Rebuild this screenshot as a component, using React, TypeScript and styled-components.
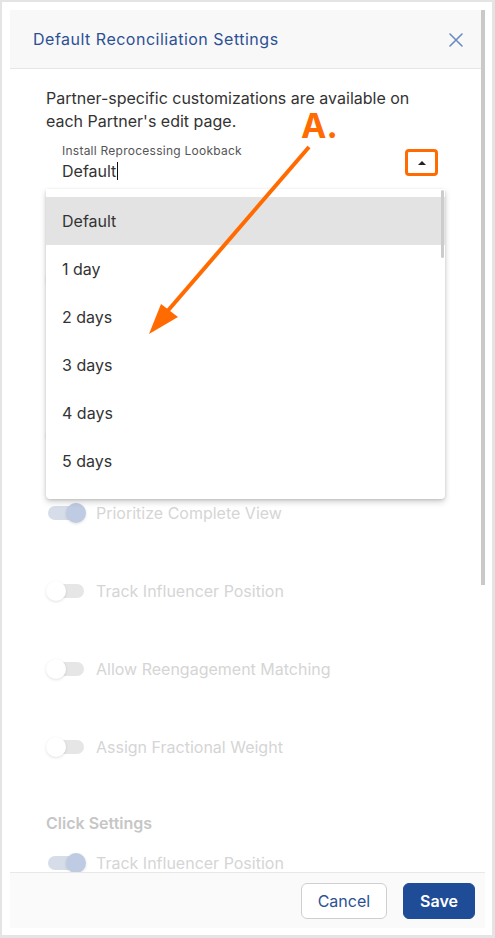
import React from 'react'
import styled, { createGlobalStyle } from 'styled-components'

const GlobalStyle = createGlobalStyle`
  html, body {
    margin: 0;
    padding: 0;
    background: #ffffff;
  }
  body {
    font-family: Inter, "Noto Sans", "Liberation Sans", sans-serif;
    color: #333333;
  }
`

const Frame = styled.div`
  position: relative;
  box-sizing: border-box;
  width: 495px;
  height: 938px;
  border: solid #e4e4e4;
  border-width: 2px 3px 3px 2px;
  padding: 8px 7px 7px 8px;
  background: #ffffff;
  overflow: hidden;
`

const Dialog = styled.div`
  position: relative;
  display: flex;
  flex-direction: column;
  height: 100%;
  background: #ffffff;
`

const Header = styled.div`
  display: flex;
  align-items: center;
  justify-content: space-between;
  height: 58px;
  padding: 0 22px 0 23px;
  background: #f8f8f9;
  border-bottom: 1px solid #e6e6e6;
  flex-shrink: 0;
`

const Title = styled.div`
  font-size: 16px;
  color: #2c5193;
  letter-spacing: 0.5px;
`

const CloseButton = styled.div`
  display: flex;
  width: 14px;
  height: 14px;
  margin-top: 2px;
`

const Body = styled.div`
  position: relative;
  flex: 1;
  overflow: hidden;
  padding: 18px 40px 0 36px;
`

const Intro = styled.p`
  margin: 0;
  font-size: 16px;
  line-height: 23px;
  color: #333333;
`

const Field = styled.div`
  position: relative;
  margin-top: 6px;
  padding: 0 8px 0 16px;
  height: 54px;
  border-bottom: 2px solid #111111;
`

const FieldLabel = styled.div`
  padding-top: 5px;
  font-size: 12px;
  line-height: 14px;
  letter-spacing: 0.25px;
  color: #555555;
`

const FieldValue = styled.div`
  display: flex;
  align-items: center;
  margin-top: 3px;
  font-size: 16px;
  line-height: 20px;
  color: #333333;
`

const Caret = styled.span`
  display: inline-block;
  width: 1px;
  height: 18px;
  margin-left: 1px;
  background: #111111;
`

const ToggleButton = styled.div`
  position: absolute;
  right: 7px;
  top: 10px;
  box-sizing: border-box;
  width: 33px;
  height: 27px;
  border: 3px solid #ff6b00;
  border-radius: 4px;
  display: flex;
  align-items: center;
  justify-content: center;
`

const UpTriangle = styled.span`
  width: 0;
  height: 0;
  border-left: 4px solid transparent;
  border-right: 4px solid transparent;
  border-bottom: 4px solid #222222;
`

const SectionTitle = styled.div<{ $gap: number }>`
  margin-top: ${p => p.$gap}px;
  font-size: 16px;
  font-weight: 600;
  line-height: 22px;
  color: #c6c6c6;
`

const ToggleList = styled.div<{ $gap: number }>`
  display: flex;
  flex-direction: column;
  gap: 38px;
  margin-top: ${p => p.$gap}px;
`

const ToggleRow = styled.div`
  display: flex;
  align-items: center;
  height: 40px;
  gap: 10px;
`

const Switch = styled.div<{ $on?: boolean }>`
  position: relative;
  width: 40px;
  height: 20px;
  flex-shrink: 0;

  &::before {
    content: '';
    position: absolute;
    left: 2px;
    top: 3px;
    width: 36px;
    height: 14px;
    border-radius: 7px;
    background: ${p => (p.$on ? '#d6dde9' : '#e6e6e6')};
  }

  &::after {
    content: '';
    position: absolute;
    top: 0;
    left: ${p => (p.$on ? 20 : 0)}px;
    width: 20px;
    height: 20px;
    border-radius: 50%;
    background: ${p => (p.$on ? '#bfcbe3' : '#ffffff')};
    box-shadow: 0 1px 3px rgba(0, 0, 0, 0.12);
  }
`

const ToggleLabel = styled.span`
  font-size: 16px;
  color: #d5d5d5;
`

const Menu = styled.div`
  position: absolute;
  top: 120px;
  left: 36px;
  width: 399px;
  height: 310px;
  padding-top: 8px;
  box-sizing: border-box;
  background: #ffffff;
  border-radius: 0 0 4px 4px;
  box-shadow: 0 3px 6px rgba(0, 0, 0, 0.18), 0 1px 3px rgba(0, 0, 0, 0.12);
  overflow: hidden;
  z-index: 2;
`

const MenuItem = styled.div<{ $active?: boolean }>`
  display: flex;
  align-items: center;
  height: 48px;
  padding-left: 16px;
  font-size: 16px;
  color: #333333;
  background: ${p => (p.$active ? '#e3e3e3' : 'transparent')};
`

const MenuScroll = styled.div`
  position: absolute;
  top: 1px;
  right: 1px;
  width: 3px;
  height: 68px;
  border-radius: 2px;
  background: #cccccc;
`

const Footer = styled.div`
  display: flex;
  justify-content: flex-end;
  align-items: center;
  gap: 16px;
  height: 55px;
  padding: 0 10px;
  background: #fafafa;
  border-top: 1px solid #e8e8e8;
  flex-shrink: 0;
`

const Button = styled.button<{ $primary?: boolean }>`
  box-sizing: border-box;
  height: 36px;
  padding: 0 ${p => (p.$primary ? 16 : 16)}px;
  border-radius: 6px;
  font-family: Inter, "Noto Sans", "Liberation Sans", sans-serif;
  font-size: 16px;
  font-weight: ${p => (p.$primary ? 600 : 400)};
  color: ${p => (p.$primary ? '#ffffff' : '#2c5193')};
  background: ${p => (p.$primary ? '#1e4c96' : '#ffffff')};
  border: 1px solid ${p => (p.$primary ? '#1e4c96' : '#cfcfcf')};
`

const ScrollThumb = styled.div`
  position: absolute;
  top: 0;
  right: 0;
  width: 4px;
  height: 575px;
  background: #c9c9c9;
  z-index: 3;
`

const Note = styled.div`
  position: absolute;
  left: 299px;
  top: 104px;
  font-size: 34px;
  font-weight: 700;
  line-height: 40px;
  color: #ff6b00;
  z-index: 5;
`

const ArrowLayer = styled.svg`
  position: absolute;
  left: 0;
  top: 0;
  pointer-events: none;
  z-index: 5;
`

const options = ['Default', '1 day', '2 days', '3 days', '4 days', '5 days', '6 days']

const installToggles = [
  { label: 'Prioritize Latest Install', on: false },
  { label: 'Prioritize Install View', on: true },
  { label: 'Allow Install Matching', on: false },
]

const viewToggles = [
  { label: 'Prioritize Complete View', on: true },
  { label: 'Track Influencer Position', on: false },
  { label: 'Allow Reengagement Matching', on: false },
  { label: 'Assign Fractional Weight', on: false },
]

export default function App() {
  return (
    <>
      <GlobalStyle />
      <Frame>
        <Dialog>
          <Header>
            <Title>Default Reconciliation Settings</Title>
            <CloseButton>
              <svg width="14" height="14" viewBox="0 0 14 14">
                <path d="M1 1 L13 13 M13 1 L1 13" stroke="#6a8bc2" strokeWidth="1.6" strokeLinecap="round" />
              </svg>
            </CloseButton>
          </Header>
          <Body>
            <Intro>
              Partner-specific customizations are available on each Partner's edit page.
            </Intro>
            <Field>
              <FieldLabel>Install Reprocessing Lookback</FieldLabel>
              <FieldValue>
                Default<Caret />
              </FieldValue>
              <ToggleButton>
                <UpTriangle />
              </ToggleButton>
            </Field>

            <SectionTitle $gap={33}>Install Settings</SectionTitle>
            <ToggleList $gap={9}>
              {[...installToggles, ...viewToggles].map(t => (
                <ToggleRow key={t.label}>
                  <Switch $on={t.on} />
                  <ToggleLabel>{t.label}</ToggleLabel>
                </ToggleRow>
              ))}
            </ToggleList>

            <SectionTitle $gap={45}>Click Settings</SectionTitle>
            <ToggleList $gap={9}>
              <ToggleRow>
                <Switch $on />
                <ToggleLabel>Track Influencer Position</ToggleLabel>
              </ToggleRow>
            </ToggleList>

            <Menu>
              {options.map((o, i) => (
                <MenuItem key={o} $active={i === 0}>{o}</MenuItem>
              ))}
              <MenuScroll />
            </Menu>
          </Body>
          <Footer>
            <Button>Cancel</Button>
            <Button $primary>Save</Button>
          </Footer>
          <ScrollThumb />
        </Dialog>
        <Note>A.</Note>
        <ArrowLayer width="495" height="938" viewBox="0 0 495 938">
          <line x1="307" y1="145" x2="163" y2="312" stroke="#ff6b00" strokeWidth="4" />
          <polygon points="147,332 159,302 176,315" fill="#ff6b00" />
        </ArrowLayer>
      </Frame>
    </>
  )
}
